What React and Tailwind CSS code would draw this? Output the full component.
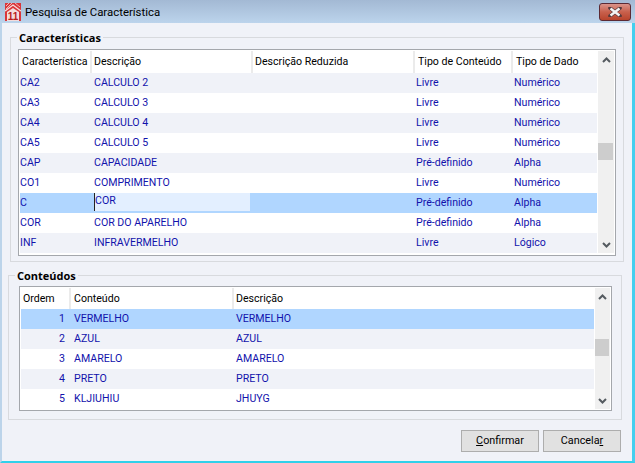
const caracteristicas = [
  ["CA2", "CALCULO 2", "", "Livre", "Numérico"],
  ["CA3", "CALCULO 3", "", "Livre", "Numérico"],
  ["CA4", "CALCULO 4", "", "Livre", "Numérico"],
  ["CA5", "CALCULO 5", "", "Livre", "Numérico"],
  ["CAP", "CAPACIDADE", "", "Pré-definido", "Alpha"],
  ["CO1", "COMPRIMENTO", "", "Livre", "Numérico"],
  ["C", "COR", "", "Pré-definido", "Alpha"],
  ["COR", "COR DO APARELHO", "", "Pré-definido", "Alpha"],
  ["INF", "INFRAVERMELHO", "", "Livre", "Lógico"],
];

const conteudos = [
  ["1", "VERMELHO", "VERMELHO"],
  ["2", "AZUL", "AZUL"],
  ["3", "AMARELO", "AMARELO"],
  ["4", "PRETO", "PRETO"],
  ["5", "KLJIUHIU", "JHUYG"],
];

function rowColor(selected, even) {
  if (selected) return "bg-[#b0d6ff]";
  return even ? "bg-[#f0f2f8]" : "bg-white";
}

function Logo() {
  return (
    <svg width="16" height="18" viewBox="0 0 16 18" className="shrink-0">
      <rect width="16" height="18" fill="#d9363a" />
      <path d="M1 3 L4 0 M1 6 L7 0 M10 0 L15 4" stroke="#f3b4b4" strokeWidth="1" />
      <path d="M0 8 L8 2 L16 8" fill="none" stroke="#f6dede" strokeWidth="1.4" />
      <path d="M2 9 L8 5 L14 9 L14 18 L2 18 Z" fill="#f3dcdc" />
      <text x="8" y="16.5" textAnchor="middle" fontFamily="Liberation Sans" fontWeight="700" fontSize="10" fill="#b81c1c">
        11
      </text>
    </svg>
  );
}

function CloseButton() {
  return (
    <div className="flex h-[18px] w-[32px] items-center justify-center rounded-[3px] border border-[#5c2a34] bg-gradient-to-b from-[#d9938a] via-[#c8604c] to-[#b8442c]">
      <svg width="14" height="10" viewBox="0 0 14 10">
        <path d="M2 1 L12 9 M12 1 L2 9" stroke="#55393c" strokeWidth="3.6" strokeLinecap="round" />
        <path d="M2.5 1.5 L11.5 8.5 M11.5 1.5 L2.5 8.5" stroke="#f4f4f4" strokeWidth="2.4" />
      </svg>
    </div>
  );
}

function Arrow({ up }) {
  return (
    <svg width="9" height="6" viewBox="0 0 9 6">
      <path d={up ? "M1 5 L4.5 1.5 L8 5" : "M1 1 L4.5 4.5 L8 1"} fill="none" stroke="#555b60" strokeWidth="2" />
    </svg>
  );
}

function Scrollbar({ className, thumbClass }) {
  return (
    <div className={`flex shrink-0 flex-col bg-[#f0f0f0] ${className}`}>
      <div className="flex h-[17px] items-center justify-center">
        <Arrow up />
      </div>
      <div className={`mr-px h-[17px] bg-[#cdcdcd] ${thumbClass}`} />
      <div className="flex-1" />
      <div className="flex h-[17px] items-center justify-center">
        <Arrow />
      </div>
    </div>
  );
}

function HeaderCell({ children, className = "" }) {
  return (
    <div className={`flex h-full items-center border-r-2 border-[#ebebeb] text-black ${className}`}>
      <span className="whitespace-nowrap">{children}</span>
    </div>
  );
}

function Group({ title, className, children }) {
  return (
    <div className={`border border-[#d8dade] ${className}`}>
      <div className="-mt-[7px] flex h-[14px]">
        <span className="ml-[6px] bg-[#f0f2f8] px-[2px] font-['Open_Sans',sans-serif] text-[11px] leading-[14px] font-bold text-black">
          {title}
        </span>
      </div>
      {children}
    </div>
  );
}

export default function App() {
  return (
    <div className="flex h-[463px] w-[635px] flex-col overflow-hidden bg-[#f0f2f8] font-['Roboto','Liberation_Sans',sans-serif] text-[10.6px]">
      <div className="flex h-[23px] shrink-0 items-start bg-gradient-to-b from-[#a3b9d4] to-[#bcd4ec] pt-[3px] pr-[4px] pl-[5px]">
        <Logo />
        <span className="ml-[4px] text-[11.4px] leading-[18px] text-black">Pesquisa de Característica</span>
        <div className="ml-auto">
          <CloseButton />
        </div>
      </div>

      <div className="flex min-h-0 flex-1 flex-col border-r-[3px] border-b-2 border-l-2 border-r-[#45cfee] border-b-[#30d0ea] border-l-[#bcd4ea]">
        <Group title="Características" className="mt-[14px] mr-[8px] ml-[8px] h-[225px]">
          <div className="mt-[4px] mr-[7px] ml-[7px] flex h-[207px] border border-[#a4a7ac] bg-white p-px">
            <div className="min-w-0 flex-1">
              <div className="grid h-[22px] grid-cols-[72px_161px_162px_98px_85px]">
                <HeaderCell className="pl-[2px]">Característica</HeaderCell>
                <HeaderCell className="pl-[2px]">Descrição</HeaderCell>
                <HeaderCell className="pl-[2px]">Descrição Reduzida</HeaderCell>
                <HeaderCell className="pl-[3px]">Tipo de Conteúdo</HeaderCell>
                <div className="flex items-center pl-[3px] text-black">Tipo de Dado</div>
              </div>
              {caracteristicas.map((row, i) => (
                <div
                  key={row[0]}
                  className={`grid h-5 grid-cols-[73px_159px_162px_98px_85px] items-center text-[#1212ac] ${rowColor(i === 6, i % 2 === 0)}`}
                >
                  <div>{row[0]}</div>
                  {i === 6 ? (
                    <div className="mr-[2px] ml-px flex h-[18px] items-center self-start border-l border-l-[#222] bg-[#e3efff] pb-[3px]">
                      {row[1]}
                    </div>
                  ) : (
                    <div className="pl-px">{row[1]}</div>
                  )}
                  <div>{row[2]}</div>
                  <div className="pl-[2px]">{row[3]}</div>
                  <div className="pl-[2px]">{row[4]}</div>
                </div>
              ))}
            </div>
            <Scrollbar className="ml-px h-[202px] w-4" thumbClass="mt-[75px]" />
          </div>
        </Group>

        <Group title="Conteúdos" className="mt-[13px] mr-[10px] ml-[6px] h-[145px]">
          <div className="mt-[3px] mr-[9px] ml-[10px] flex h-[125px] border border-[#a4a7ac] bg-white p-px">
            <div className="min-w-0 flex-1">
              <div className="grid h-[21px] grid-cols-[50px_163px_360px]">
                <HeaderCell className="pl-[2px]">Ordem</HeaderCell>
                <HeaderCell className="pl-[3px]">Conteúdo</HeaderCell>
                <div className="flex items-center pl-[2px] text-black">Descrição</div>
              </div>
              <div>
                {conteudos.map((row, i) => (
                  <div
                    key={row[0]}
                    className={`grid h-5 grid-cols-[50px_163px_360px] items-center text-[#1212ac] ${rowColor(i === 0, i % 2 === 1)}`}
                  >
                    <div className="pr-[6px] text-right">{row[0]}</div>
                    <div className="pl-[3px]">{row[1]}</div>
                    <div className="pl-[2px]">{row[2]}</div>
                  </div>
                ))}
              </div>
            </div>
            <Scrollbar className="ml-px h-[121px] w-[15px]" thumbClass="mt-[34px]" />
          </div>
        </Group>

        <div className="mt-[10px] flex justify-end gap-[4px] pr-[11px]">
          <button className="h-[22px] w-[78px] border border-[#adadad] bg-[#e1e1e1] text-[10.8px] text-black">
            <span className="underline">C</span>onfirmar
          </button>
          <button className="h-[22px] w-[78px] border border-[#adadad] bg-[#e1e1e1] text-[10.8px] text-black">
            Cancela<span className="underline">r</span>
          </button>
        </div>
      </div>
    </div>
  );
}
